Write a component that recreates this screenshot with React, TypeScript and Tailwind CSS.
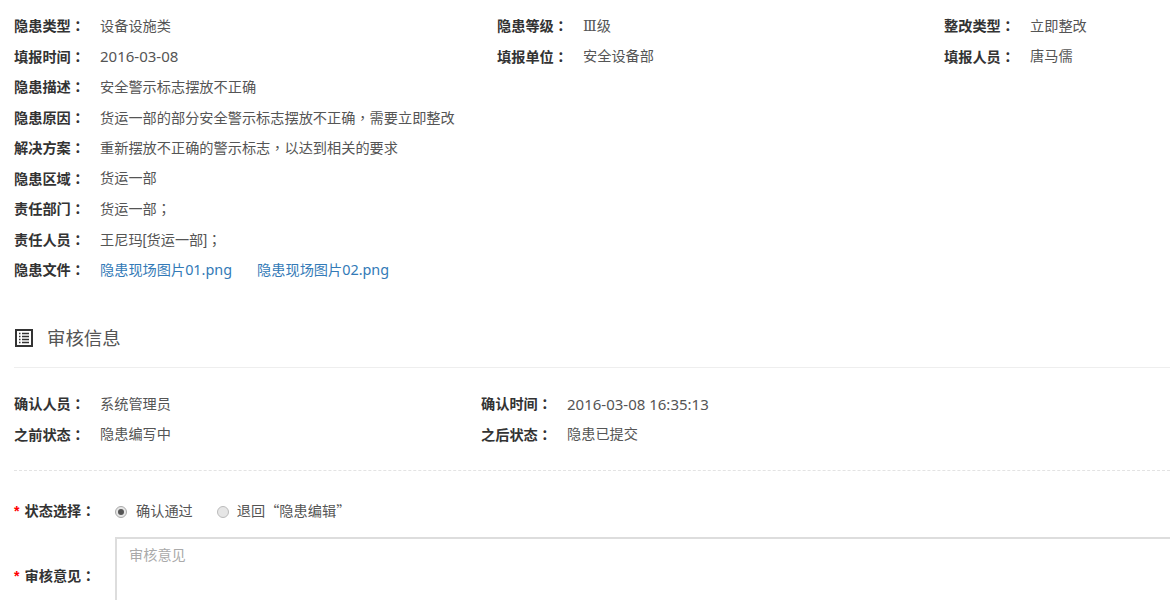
const font = { fontFamily: '"Liberation Sans", "Noto Sans CJK SC", sans-serif' };

// centered full-width punctuation
function P({ children }: { children: React.ReactNode }) {
  return <span className="font-['Noto_Sans_CJK_TC']">{children}</span>;
}

// latin text and digits
function L({ children }: { children: React.ReactNode }) {
  return <span className="font-['Noto_Sans'] text-[15px]">{children}</span>;
}

function FileLink({ name }: { name: string }) {
  return (
    <a>
      隐患现场图片<span className="font-['Noto_Sans'] text-[14.4px]">{name}</span>
    </a>
  );
}

function Field({ label, children, className }: { label: string; children: React.ReactNode; className?: string }) {
  return (
    <div className={"flex h-[30.5px] items-center " + (className || "")}>
      <span className="w-[86px] shrink-0 font-bold text-[#333]">
        {label}
        <P>：</P>
      </span>
      <span className="text-[#555]">{children}</span>
    </div>
  );
}

export default function App() {
  return (
    <div className="h-[600px] w-[1170px] overflow-hidden bg-white pl-[14px] text-[14.2px]" style={font}>
      {/* Base info */}
      <div className="pt-[11px]">
        <div className="grid grid-cols-[483px_447px_1fr]">
          <Field label="隐患类型">设备设施类</Field>
          <Field label="隐患等级">
            <span className="font-['DejaVu_Serif']">Ⅲ</span>级
          </Field>
          <Field label="整改类型">立即整改</Field>
          <Field label="填报时间">
            <L>2016-03-08</L>
          </Field>
          <Field label="填报单位">安全设备部</Field>
          <Field label="填报人员">唐马儒</Field>
        </div>
        <Field label="隐患描述">安全警示标志摆放不正确</Field>
        <Field label="隐患原因">
          货运一部的部分安全警示标志摆放不正确<P>，</P>需要立即整改
        </Field>
        <Field label="解决方案">
          重新摆放不正确的警示标志<P>，</P>以达到相关的要求
        </Field>
        <Field label="隐患区域">货运一部</Field>
        <Field label="责任部门">
          货运一部<P>；</P>
        </Field>
        <Field label="责任人员">
          王尼玛[货运一部]<P>；</P>
        </Field>
        <Field label="隐患文件">
          <span className="flex gap-[25px] text-[#337ab7]">
            <FileLink name="01.png" />
            <FileLink name="02.png" />
          </span>
        </Field>
      </div>

      {/* Audit info */}
      <div className="mt-[25px] flex h-[57px] items-center gap-[14px] border-b border-[#eee]">
        <svg width="18" height="18" viewBox="0 0 18 18" className="mb-[2px] ml-px text-[#333]" fill="none" stroke="currentColor">
          <rect x="1" y="1" width="16" height="16" strokeWidth="2" />
          <path d="M4 4.5h1.5M7 4.5h7M4 7.5h1.5M7 7.5h7M4 10.5h1.5M7 10.5h7M4 13.5h1.5M7 13.5h7" strokeWidth="1.4" />
        </svg>
        <h2 className="text-[18.4px] font-normal text-[#555]">审核信息</h2>
      </div>
      <div className="mt-[21.5px] grid grid-cols-[467px_1fr]">
        <Field label="确认人员">系统管理员</Field>
        <Field label="确认时间">
          <L>2016-03-08 16:35:13</L>
        </Field>
        <Field label="之前状态">隐患编写中</Field>
        <Field label="之后状态">隐患已提交</Field>
      </div>
      <div className="mt-[20px] border-b border-dashed border-[#e3e3e3]" />

      {/* Form */}
      <div className="mt-[25.5px] flex h-[30px] items-center">
        <span className="w-[101px] shrink-0 font-bold text-[#333]">
          <span className="mr-[5px] text-[#f00]">*</span>状态选择<P>：</P>
        </span>
        <span className="flex h-[12px] w-[12px] items-center justify-center rounded-full border border-[#aaa] bg-[#e6e6e6]">
          <span className="h-[6px] w-[6px] rounded-full bg-[#555]" />
        </span>
        <span className="ml-[9px] text-[#555]">确认通过</span>
        <span className="ml-[24px] h-[12px] w-[12px] rounded-full border border-[#bbb] bg-[#e6e6e6]" />
        <span className="ml-[8px] text-[#555]">
          退回<span className="font-['Noto_Sans_CJK_SC']">“</span>隐患编辑<span className="font-['Noto_Sans_CJK_SC']">”</span>
        </span>
      </div>
      <div className="mt-[10px] flex">
        <span className="mt-[28px] w-[101px] shrink-0 font-bold text-[#333]">
          <span className="mr-[5px] text-[#f00]">*</span>审核意见<P>：</P>
        </span>
        <div className="h-[80px] flex-1 border-t-2 border-l-2 border-[#ddd] pl-[12px] pt-[6px] text-[#aaa]">审核意见</div>
      </div>
    </div>
  );
}
